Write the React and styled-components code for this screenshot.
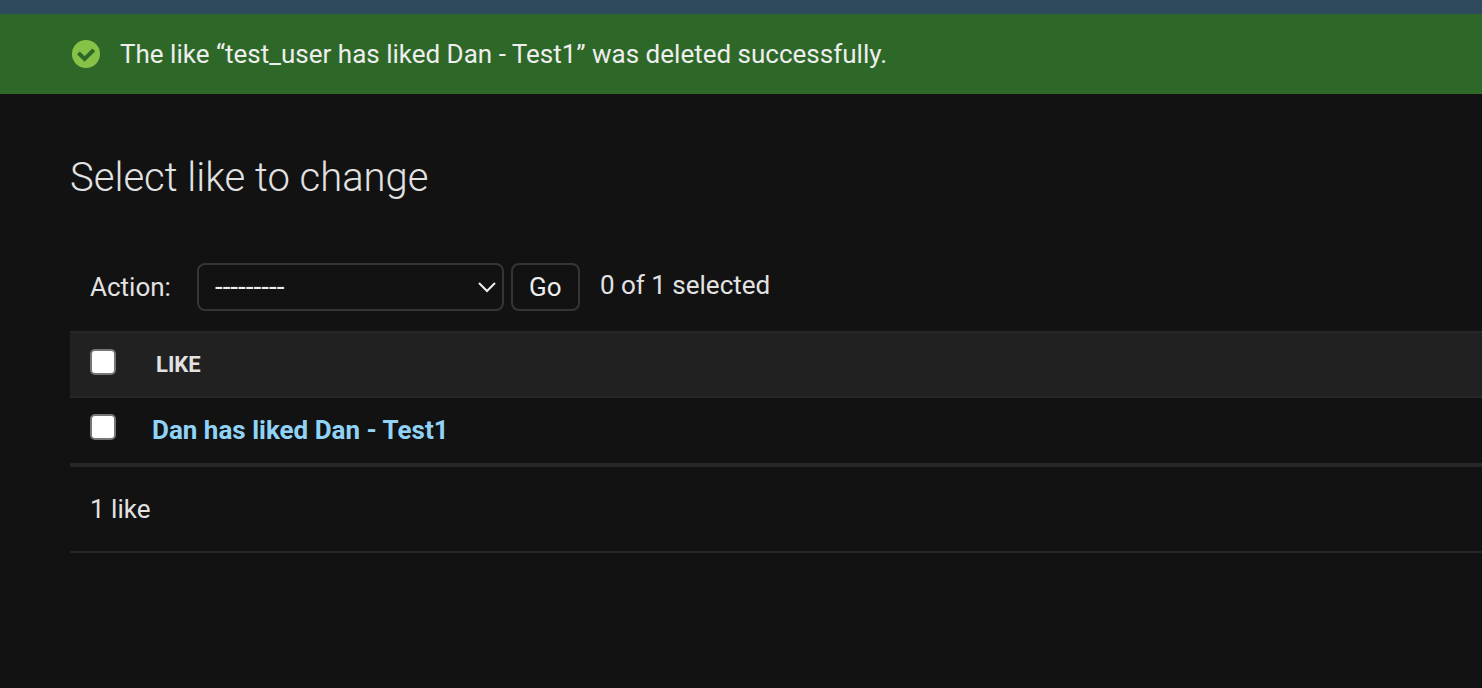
import React from "react";
import styled, { createGlobalStyle } from "styled-components";

const GlobalStyle = createGlobalStyle`
  *, *::before, *::after { box-sizing: border-box; }
  body {
    margin: 0;
    background: #121212;
    color: #e2e2e2;
    font-family: Roboto, "Liberation Sans", sans-serif;
    font-size: 26px;
    line-height: 32px;
  }
`;

const HeaderEdge = styled.header`
  height: 14px;
  background: #304a5d;
`;

const Message = styled.div`
  display: flex;
  align-items: center;
  gap: 20px;
  padding: 24px 72px;
  background: #2e6828;
  color: #eeeeee;
`;

const Content = styled.main`
  padding: 60px 0 0 70px;
`;

const Title = styled.h1`
  margin: 0 0 62px;
  font-size: 40px;
  font-weight: 300;
  line-height: 47px;
`;

const Actions = styled.form`
  display: flex;
  align-items: center;
  padding: 0 20px 20px;
`;

const ActionLabel = styled.label`
  margin-right: 26px;
`;

const SelectWrap = styled.span`
  position: relative;
  display: flex;
  width: 307px;
  margin-right: 7px;
  svg {
    position: absolute;
    right: 7px;
    top: 17px;
    pointer-events: none;
  }
`;

const Select = styled.select`
  appearance: none;
  width: 100%;
  height: 48px;
  padding: 0 16px;
  border: 2px solid #353535;
  border-radius: 8px;
  background: #121212;
  color: #eeeeee;
  font: inherit;
  font-size: 28px;
`;

const GoButton = styled.button`
  width: 69px;
  height: 48px;
  margin-right: 20px;
  padding: 0;
  border: 2px solid #353535;
  border-radius: 8px;
  background: #121212;
  color: #eeeeee;
  font: inherit;
`;

const Counter = styled.span`
  padding-bottom: 4px;
`;

const Table = styled.table`
  width: 100%;
  border-collapse: separate;
  border-spacing: 0;
`;

const Cell = styled.td`
  height: 67px;
  padding: 16px 0 0;
  text-align: left;
  vertical-align: top;
  border-bottom: 2px solid #272727;
`;

const HeadCell = styled(Cell)`
  padding: 0 0 0 4px;
  vertical-align: middle;
  border-top: 2px solid #272727;
  background: #212121;
  font-size: 22px;
  font-weight: 700;
`;

const CheckCell = styled(Cell)`
  width: 82px;
  padding-left: 20px;
  ${(p) => p.$head && "border-top: 2px solid #272727; background: #212121;"}
`;

const CheckBox = styled.input`
  appearance: none;
  display: block;
  width: 26px;
  height: 26px;
  margin: 0;
  border: 2px solid #767676;
  border-radius: 5px;
  background: #ffffff;
  &:checked { background: #90d3f6; }
`;

const RowLink = styled.a`
  color: #90d3f6;
  font-weight: 700;
  text-decoration: none;
`;

const Paginator = styled.p`
  margin: 0;
  padding: 26px 20px;
  border-top: 2px solid #272727;
  border-bottom: 2px solid #272727;
`;

function SuccessIcon() {
  return (
    <svg width="28" height="28" viewBox="0 0 28 28" aria-hidden="true">
      <circle cx="14" cy="14" r="14" fill="#86c148" />
      <path d="M6.4 12.8 12.6 19 21.8 9.8" fill="none" stroke="#2e6828" strokeWidth="4" />
    </svg>
  );
}

export default function App() {
  return (
    <>
      <GlobalStyle />
      <HeaderEdge />
      <Message role="status">
        <SuccessIcon />
        <span>The like “test_user has liked Dan - Test1” was deleted successfully.</span>
      </Message>
      <Content>
        <Title>Select like to change</Title>
        <Actions onSubmit={(e) => e.preventDefault()}>
          <ActionLabel htmlFor="action">Action:</ActionLabel>
          <SelectWrap>
            <Select id="action" name="action">
              <option>---------</option>
            </Select>
            <svg width="20" height="14" viewBox="0 0 20 14" aria-hidden="true">
              <path d="M2 3 10 11 18 3" fill="none" stroke="#eeeeee" strokeWidth="2" />
            </svg>
          </SelectWrap>
          <GoButton type="submit">Go</GoButton>
          <Counter>0 of 1 selected</Counter>
        </Actions>
        <Table>
          <thead>
            <tr>
              <CheckCell as="th" $head>
                <CheckBox type="checkbox" aria-label="Select all" />
              </CheckCell>
              <HeadCell as="th" scope="col">LIKE</HeadCell>
            </tr>
          </thead>
          <tbody>
            <tr>
              <CheckCell>
                <CheckBox type="checkbox" aria-label="Select Dan has liked Dan - Test1" />
              </CheckCell>
              <Cell as="th" scope="row">
                <RowLink href="#like">Dan has liked Dan - Test1</RowLink>
              </Cell>
            </tr>
          </tbody>
        </Table>
        <Paginator>1 like</Paginator>
      </Content>
    </>
  );
}
